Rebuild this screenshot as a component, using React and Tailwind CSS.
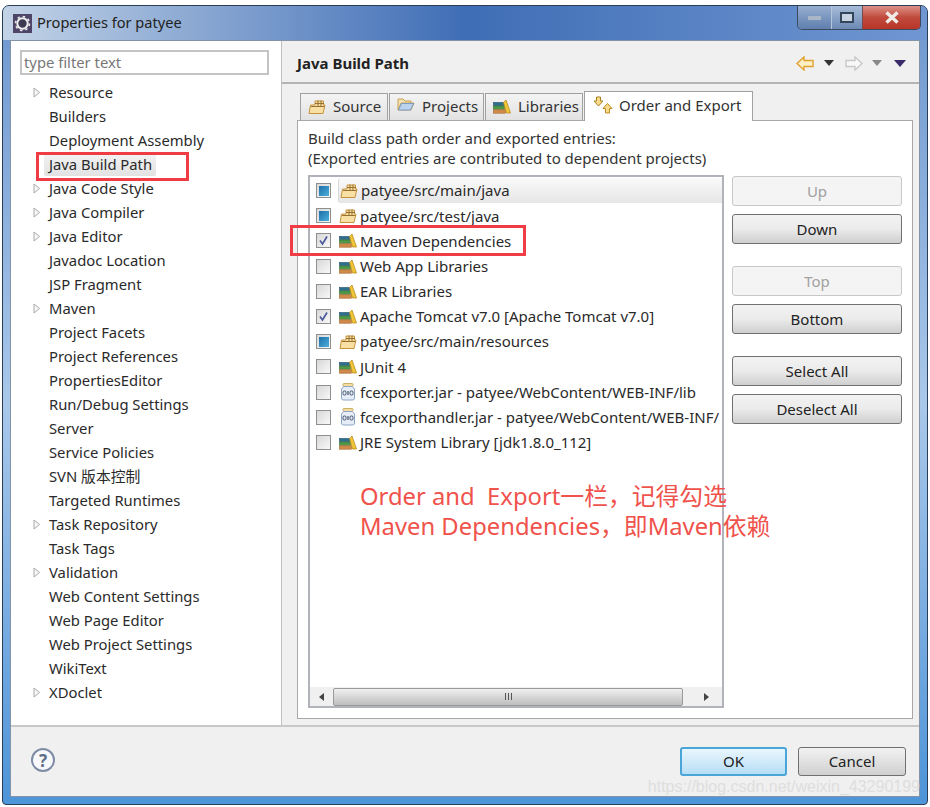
import React from 'react';

const TREE_ITEMS = [
  { label: 'Resource', arrow: true },
  { label: 'Builders' },
  { label: 'Deployment Assembly' },
  { label: 'Java Build Path', selected: true },
  { label: 'Java Code Style', arrow: true },
  { label: 'Java Compiler', arrow: true },
  { label: 'Java Editor', arrow: true },
  { label: 'Javadoc Location' },
  { label: 'JSP Fragment' },
  { label: 'Maven', arrow: true },
  { label: 'Project Facets' },
  { label: 'Project References' },
  { label: 'PropertiesEditor' },
  { label: 'Run/Debug Settings' },
  { label: 'Server' },
  { label: 'Service Policies' },
  { label: 'SVN 版本控制' },
  { label: 'Targeted Runtimes' },
  { label: 'Task Repository', arrow: true },
  { label: 'Task Tags' },
  { label: 'Validation', arrow: true },
  { label: 'Web Content Settings' },
  { label: 'Web Page Editor' },
  { label: 'Web Project Settings' },
  { label: 'WikiText' },
  { label: 'XDoclet', arrow: true }
];

const ENTRIES = [
  { label: 'patyee/src/main/java', icon: 'pkg', check: 'mixed', selected: true },
  { label: 'patyee/src/test/java', icon: 'pkg', check: 'mixed' },
  { label: 'Maven Dependencies', icon: 'lib', check: 'on' },
  { label: 'Web App Libraries', icon: 'lib', check: 'off' },
  { label: 'EAR Libraries', icon: 'lib', check: 'off' },
  { label: 'Apache Tomcat v7.0 [Apache Tomcat v7.0]', icon: 'lib', check: 'on' },
  { label: 'patyee/src/main/resources', icon: 'pkg', check: 'mixed' },
  { label: 'JUnit 4', icon: 'lib', check: 'off' },
  { label: 'fcexporter.jar - patyee/WebContent/WEB-INF/lib', icon: 'jar', check: 'off' },
  { label: 'fcexporthandler.jar - patyee/WebContent/WEB-INF/', icon: 'jar', check: 'off' },
  { label: 'JRE System Library [jdk1.8.0_112]', icon: 'lib', check: 'off' }
];

function PackageIcon() {
  return (
    <svg width="18" height="16" viewBox="0 0 18 16" className="shrink-0">
      <path d="M1 14.5 L2.5 6 H7 V2 H15.5 V6 H17 L15 14.5 Z" fill="#f8e0a4" stroke="#c8923c" strokeWidth="1" />
      <path d="M10 1.5 V8 M13 1.5 V8 M7 4.5 H16 M3 7.5 H16.5" stroke="#96702e" strokeWidth="1" fill="none" />
    </svg>
  );
}

function FolderIcon() {
  return (
    <svg width="18" height="16" viewBox="0 0 18 16" className="shrink-0 -mt-[4px]">
      <path d="M1 13 V2 H6 L8 4 H14 V6 H4 L1 13 H14 L17 6 H14" fill="#f5e3b4" stroke="#c8a050" strokeWidth="1" />
      <path d="M1.5 13 L4.5 6.5 H16.5 L13.5 13 Z" fill="#bcd3ee" stroke="#7c9cc8" strokeWidth="1" />
    </svg>
  );
}

function LibraryIcon() {
  return (
    <svg width="18" height="15" viewBox="0 0 18 15" className="shrink-0">
      <rect x="0.5" y="3.5" width="11" height="3" fill="#2c6f8e" stroke="#1f4e66" strokeWidth="0.6" />
      <rect x="0.5" y="7" width="11" height="3.2" fill="#4f9a4a" stroke="#2f6d2c" strokeWidth="0.6" />
      <rect x="0.5" y="10.8" width="12" height="3.4" fill="#d08a4a" stroke="#a5652c" strokeWidth="0.6" />
      <path d="M10.5 3.5 L13 1 L17.5 14 H13.5 Z" fill="#f2c63a" stroke="#b98c1c" strokeWidth="0.8" />
    </svg>
  );
}

function JarIcon() {
  return (
    <svg width="18" height="18" viewBox="-1 0 18 18" className="shrink-0">
      <rect x="3" y="0.5" width="10" height="3" rx="1" fill="#f3dc9c" stroke="#c2a050" strokeWidth="0.8" />
      <path d="M3.5 3.5 H12.5 L14.5 6 V15 Q14.5 17 12.5 17 H3.5 Q1.5 17 1.5 15 V6 Z" fill="#e6edf7" stroke="#8ea4c6" strokeWidth="1" />
      <rect x="3" y="8" width="3" height="4" rx="1.2" fill="none" stroke="#43536e" strokeWidth="1" />
      <path d="M8 8 V12" stroke="#43536e" strokeWidth="1.2" />
      <rect x="10" y="8" width="3" height="4" rx="1.2" fill="none" stroke="#43536e" strokeWidth="1" />
    </svg>
  );
}

function OrderIcon() {
  return (
    <svg width="20" height="18" viewBox="0 0 20 18" className="shrink-0">
      <path d="M3.5 1 H7.5 V5 H10 L5.5 10 L1 5 H3.5 Z" fill="#f8dc8c" stroke="#a8801e" strokeWidth="1" />
      <path d="M12.5 17 H16.5 V12.5 H19 L14.5 7.5 L10 12.5 H12.5 Z" fill="#f8dc8c" stroke="#c08a20" strokeWidth="1" />
    </svg>
  );
}

function EntryIcon({ type }) {
  if (type === 'pkg') return <PackageIcon />;
  if (type === 'jar') return <JarIcon />;
  return <LibraryIcon />;
}

function Checkbox({ state }) {
  return (
    <span className="w-[15px] h-[15px] shrink-0 border border-[#8e8f8f] bg-gradient-to-br from-[#d8d8d8] to-[#f8f8f8] flex items-center justify-center">
      {state === 'mixed' && <span className="w-[10px] h-[10px] bg-gradient-to-br from-[#1e6fa8] to-[#4cb0dc]" />}
      {state === 'on' && (
        <svg width="11" height="11" viewBox="0 0 11 11">
          <path d="M2 5.5 L4.5 9 L9 1.5" fill="none" stroke="#4a5a9c" strokeWidth="1.7" />
        </svg>
      )}
    </span>
  );
}

function SideButton({ label, disabled, className = '' }) {
  return (
    <div
      className={`w-[170px] h-[30px] rounded-[3px] border flex items-center justify-center text-[15px] ${
        disabled
          ? 'border-[#c8c8c8] bg-[#f4f4f4] text-[#a0a0a0]'
          : 'border-[#707070] bg-gradient-to-b from-[#f2f2f2] via-[#ebebeb] to-[#cfcfcf] text-[#222]'
      } ${className}`}
    >
      {label}
    </div>
  );
}

function Tab({ label, icon, width }) {
  return (
    <div
      style={{ width }}
      className="h-[27px] mr-px pb-px border border-b-0 border-[#a0a0a0] bg-gradient-to-b from-[#f4f4f4] to-[#e2e2e2] flex items-center gap-[7px] pl-[7px] text-[15px] text-[#333]"
    >
      {icon}
      {label}
    </div>
  );
}

export default function App() {
  return (
    <div
      className="w-[930px] h-[807px] bg-white overflow-hidden pt-[5px] pl-[2px] text-[#2a2a2a]"
      style={{ fontFamily: '"Noto Sans", "Noto Sans CJK SC", sans-serif' }}
    >
      <div className="w-[926px] h-[800px] rounded-t-[7px] rounded-b-[4px] border border-[#2c3e55] bg-gradient-to-b from-[#6f97cf] via-[#a9c8ea] to-[#4d94d8] px-[7px] pb-[7px] flex flex-col">
        {/* Title bar */}
        <div className="h-[34px] shrink-0 -mx-[7px] px-[10px] rounded-t-[6px] flex items-start bg-gradient-to-r from-[#c3d3e6] via-[#3f6db5] to-[#7097d2]">
          <div className="flex items-center gap-[5px] h-[34px]">
            <span className="w-[19px] h-[19px] bg-[#4d4468] flex items-center justify-center">
              <svg width="17" height="17" viewBox="0 0 17 17">
                <circle cx="8.5" cy="8.5" r="5.2" fill="#3e3a52" stroke="#eeeeee" strokeWidth="2" />
                <circle cx="8.5" cy="8.5" r="7" fill="none" stroke="#e8e8e8" strokeWidth="1.6" strokeDasharray="2.5 3" />
              </svg>
            </span>
            <span className="text-[14.6px] text-[#222]">Properties for patyee</span>
          </div>
          <div className="ml-auto mr-[-4px] flex h-[24px] rounded-b-[5px] border border-t-0 border-[#3c4a60] overflow-hidden">
            <div className="w-[34px] border-r border-[#b6c6dc] bg-gradient-to-b from-[#98aed0] to-[#5f7fae] flex items-center justify-center">
              <span className="w-[13px] h-[4px] bg-[#a9b6c8]" />
            </div>
            <div className="w-[31px] border-r border-[#7a4a4a] bg-gradient-to-b from-[#a8bcd8] to-[#6c8ab6] flex items-center justify-center">
              <span className="w-[14px] h-[11px] border-2 border-[#34465c] bg-[#c8d4e4]" />
            </div>
            <div className="w-[57px] bg-gradient-to-b from-[#dc9088] via-[#c04a3c] to-[#b83428] flex items-center justify-center">
              <svg width="16" height="13" viewBox="0 0 16 13">
                <path d="M2.5 1.5 L13.5 11.5 M13.5 1.5 L2.5 11.5" stroke="#f0ece8" strokeWidth="3.4" />
              </svg>
            </div>
          </div>
        </div>

        {/* Dialog content */}
        <div className="flex-1 border border-[#8494a8] bg-[#f0f0f0] flex flex-col">
          <div className="h-[686px] flex border-b-2 border-[#c8c8c8]">
            {/* Left tree */}
            <div className="w-[271px] shrink-0 bg-white border-r border-[#c0c0c0] pt-[9px] pl-[9px]">
              <div className="w-[249px] h-[25px] border-2 border-[#c4c4c4] pl-[2px] flex items-center text-[14.8px] text-[#777]">
                type filter text
              </div>
              <div className="mt-[5px]">
                {TREE_ITEMS.map((item) => (
                  <div key={item.label} className="h-[24px] flex items-center text-[14.8px]">
                    <span className="w-[29px] shrink-0 pl-[13px] flex items-center">
                      {item.arrow && (
                        <svg width="8" height="11" viewBox="0 0 8 11">
                          <path d="M1 1 L6.5 5.5 L1 10 Z" fill="#fafafa" stroke="#a8a8a8" strokeWidth="1" />
                        </svg>
                      )}
                    </span>
                    <span className={item.selected ? 'ml-[-5px] pl-[5px] pr-[4px] h-[24px] flex items-center rounded-[2px] bg-gradient-to-b from-[#f4f4f4] to-[#e2e2e2]' : ''}>
                      {item.label}
                    </span>
                  </div>
                ))}
              </div>
            </div>

            {/* Right page */}
            <div className="flex-1 flex flex-col">
              <div className="h-[43px] shrink-0 border-b-2 border-[#b4b4b4] flex items-center pt-[3px] pl-[15px] pr-[13px]">
                <span className="text-[15px] font-bold text-[#222]">Java Build Path</span>
                <div className="ml-auto flex items-center">
                  <svg width="18" height="15" viewBox="0 0 18 15">
                    <path d="M1 7.5 L8 1 V4.5 H17 V10.5 H8 V14 Z" fill="#fdf0c4" stroke="#e0a030" strokeWidth="1.4" />
                  </svg>
                  <svg width="10" height="6" viewBox="0 0 10 6" className="ml-[10px]">
                    <path d="M0 0 H10 L5 6 Z" fill="#333" />
                  </svg>
                  <svg width="18" height="15" viewBox="0 0 18 15" className="ml-[11px]">
                    <path d="M17 7.5 L10 1 V4.5 H1 V10.5 H10 V14 Z" fill="#f8f8f8" stroke="#c8c8c8" strokeWidth="1.4" />
                  </svg>
                  <svg width="10" height="6" viewBox="0 0 10 6" className="ml-[9px]">
                    <path d="M0 0 H10 L5 6 Z" fill="#888" />
                  </svg>
                  <svg width="12" height="7" viewBox="0 0 12 7" className="ml-[12px]">
                    <path d="M0 0 H12 L6 7 Z" fill="#3a2a6a" />
                  </svg>
                </div>
              </div>

              <div className="pt-[6px] pl-[15px] w-[631px]">
                <div className="flex items-end pl-[3px] h-[30px]">
                  <Tab label="Source" icon={<PackageIcon />} width={88} />
                  <Tab label="Projects" icon={<FolderIcon />} width={95} />
                  <Tab label="Libraries" icon={<LibraryIcon />} width={98} />
                  <div className="relative z-10 -mb-px w-[169px] h-[30px] pb-[3px] border border-b-0 border-[#a0a0a0] bg-white flex items-center gap-[6px] pl-[8px] text-[15px] text-[#333]">
                    <OrderIcon />
                    Order and Export
                  </div>
                </div>
                <div className="h-[599px] border border-[#a8a8a8] bg-white pt-[7px] pl-[10px] flex flex-col">
                  <div className="text-[15px] leading-[20px] text-[#333]">
                    <p>Build class path order and exported entries:</p>
                    <p>(Exported entries are contributed to dependent projects)</p>
                  </div>
                  <div className="mt-[7px] flex gap-[8px]">
                    {/* Entries list */}
                    <div className="relative w-[416px] h-[533px] border-2 border-[#b0b4ba] bg-white flex flex-col">
                      <div className="flex-1 overflow-hidden pl-[6px] pt-[1px]">
                        {ENTRIES.map((entry) => (
                          <div key={entry.label} className="h-[25.2px] flex items-center text-[15px] whitespace-nowrap">
                            <Checkbox state={entry.check} />
                            <span className={`ml-[7px] flex-1 min-w-0 h-[25px] pl-[1px] flex items-center gap-[3px] ${entry.selected ? 'rounded-l-[3px] border-l border-[#d8d8d8] bg-gradient-to-b from-[#fafafa] to-[#e6e6e6]' : ''}`}>
                              <EntryIcon type={entry.icon} />
                              {entry.label}
                            </span>
                          </div>
                        ))}
                      </div>
                      {/* Scroll bar */}
                      <div className="h-[19px] shrink-0 bg-[#f0f0f0] flex items-center">
                        <div className="w-[23px] flex justify-center">
                          <svg width="5" height="8" viewBox="0 0 5 8"><path d="M5 0 V8 L0 4 Z" fill="#444" /></svg>
                        </div>
                        <div className="w-[350px] h-[18px] rounded-[2px] border border-[#9a9a9a] bg-gradient-to-b from-[#f0f0f0] to-[#bebebe] flex items-center justify-center gap-[2px]">
                          <span className="w-px h-[7px] bg-[#555]" />
                          <span className="w-px h-[7px] bg-[#555]" />
                          <span className="w-px h-[7px] bg-[#555]" />
                        </div>
                        <div className="flex-1 flex justify-center pl-[8px]">
                          <svg width="5" height="8" viewBox="0 0 5 8"><path d="M0 0 V8 L5 4 Z" fill="#444" /></svg>
                        </div>
                      </div>
                      <div className="absolute left-[50px] top-[304px] text-[23.8px] leading-[30px] text-[#f0524c] whitespace-nowrap">
                        <p>Order and&nbsp; Export一栏，记得勾选</p>
                        <p>Maven Dependencies，即Maven依赖</p>
                      </div>
                    </div>

                    {/* Buttons */}
                    <div className="flex flex-col pt-px">
                      <SideButton label="Up" disabled />
                      <SideButton label="Down" className="mt-[8px]" />
                      <SideButton label="Top" disabled className="mt-[22px]" />
                      <SideButton label="Bottom" className="mt-[8px]" />
                      <SideButton label="Select All" className="mt-[22px]" />
                      <SideButton label="Deselect All" className="mt-[8px]" />
                    </div>
                  </div>
                </div>
              </div>
            </div>
          </div>

          {/* Bottom bar */}
          <div className="relative flex-1 flex items-center pl-[20px] pr-[13px]">
            <span className="mb-[3px] w-[24px] h-[24px] rounded-full border-2 border-[#7d8ca4] bg-[#f6f8fb] flex items-center justify-center text-[17px] font-bold text-[#5f6f88] leading-none">
              ?
            </span>
            <div className="ml-auto flex gap-[11px]">
              <div className="w-[107px] h-[29px] rounded-[3px] border-2 border-[#4aa5d8] bg-gradient-to-b from-[#eaf6fd] to-[#b6def6] flex items-center justify-center text-[15px] text-[#222]">
                OK
              </div>
              <div className="w-[108px] h-[29px] rounded-[3px] border border-[#707070] bg-gradient-to-b from-[#f2f2f2] to-[#d0d0d0] flex items-center justify-center text-[15px] text-[#222]">
                Cancel
              </div>
            </div>
            <span
              className="absolute right-[-1px] bottom-[-3px] text-[16px] text-[#dedede] whitespace-nowrap"
              style={{ fontFamily: '"Liberation Sans", sans-serif' }}
            >
              https://blog.csdn.net/weixin_43290199
            </span>
          </div>
        </div>
      </div>

      {/* Red annotation boxes */}
      <div className="absolute left-[36px] top-[152px] w-[153px] h-[29px] border-[3px] border-[#f03c44] pointer-events-none" />
      <div className="absolute left-[290px] top-[225px] w-[236px] h-[31px] border-[3px] border-[#f03c44] pointer-events-none" />
    </div>
  );
}
